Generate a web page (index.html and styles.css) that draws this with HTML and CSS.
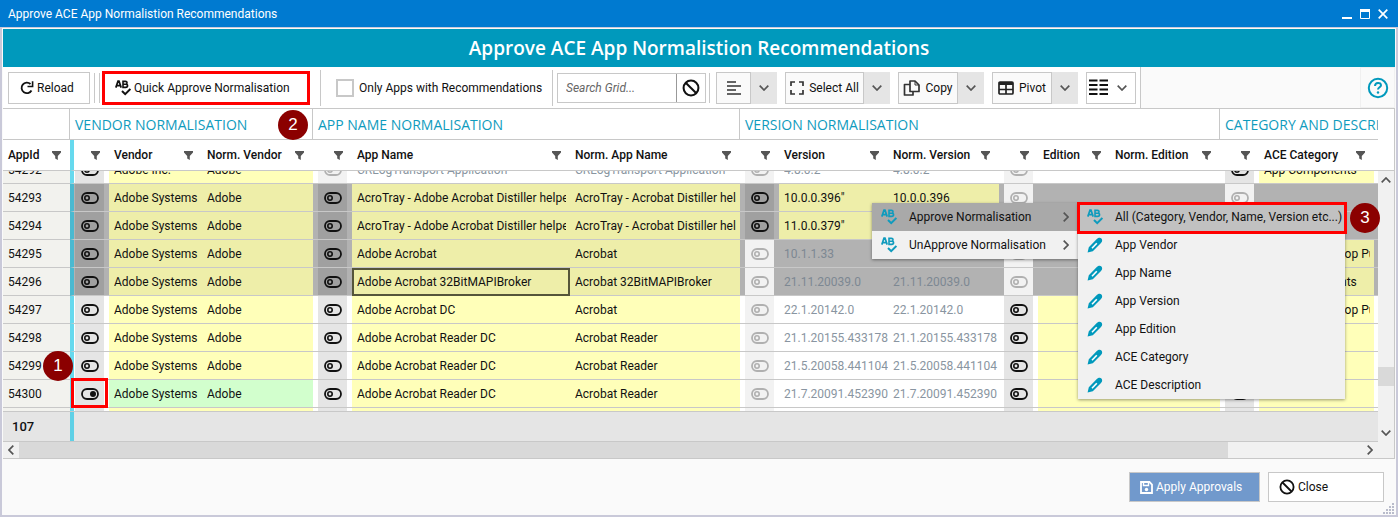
FILE: index.html
```html
<!DOCTYPE html>
<html lang="en">
<head>
  <meta charset="UTF-8">
  <title>Approve ACE App Normalistion Recommendations</title>
  <link rel="stylesheet" href="styles.css">
</head>
<body>
  <svg class="sprite">
    <symbol id="i-filter" viewBox="0 0 9 9"><path d="M0 0h9v1.5L5.8 5v4L3.2 7.5V5L0 1.5z" fill="#555"/></symbol>
    <symbol id="i-abc" viewBox="0 0 16 16">
      <path d="M.8 7.6 3 1.2h1L6.2 7.6M1.6 5.6h3.8" fill="none" stroke="currentColor" stroke-width="1.7"/>
      <path d="M8 1.4h2.4c2.2 0 2.2 2.8 0 2.8H8h2.7c2.5 0 2.5 3.2 0 3.2H8z" fill="none" stroke="currentColor" stroke-width="1.6"/>
      <path d="M7 11l3.2 3.2L15.4 9" fill="none" stroke="currentColor" stroke-width="2"/>
    </symbol>
    <symbol id="i-pen" viewBox="0 0 16 16">
      <path d="M.6 15.400l1.200-5.200L9.800 2c1.800-1.800 3.800-1.400 4.600-.6s1.400 2.800-.4 4.600L5.800 14.200z" fill="#0099bc"/>
      <path d="M5 11.200 9.800 6.300" stroke="#fff" stroke-width="1.600"/>
    </symbol>
    <symbol id="i-down" viewBox="0 0 10 6"><path d="M.7.7 5 5 9.3.7" fill="none" stroke="#555" stroke-width="1.7"/></symbol>
    <symbol id="i-right" viewBox="0 0 6 10"><path d="M.7.7 5 5 .7 9.3" fill="none" stroke="#555" stroke-width="1.7"/></symbol>
    <symbol id="i-ban" viewBox="0 0 16 16"><circle cx="8" cy="8" r="6.600" fill="none" stroke="#111" stroke-width="1.8"/><path d="M3.500 3.500l9 9" stroke="#111" stroke-width="1.8"/></symbol>
    <symbol id="i-off" viewBox="0 0 18 12"><rect x="1" y="1" width="16" height="10" rx="5" fill="none" stroke="currentColor" stroke-width="1.800"/><circle cx="6" cy="6" r="2.200" fill="none" stroke="currentColor" stroke-width="1.600"/></symbol>
    <symbol id="i-on" viewBox="0 0 18 12"><rect x="1" y="1" width="16" height="10" rx="5" fill="none" stroke="currentColor" stroke-width="1.800"/><circle cx="12" cy="6" r="3" fill="currentColor"/></symbol>
  </svg>

  <div class="window">
    <div class="titlebar">
      <span>Approve ACE App Normalistion Recommendations</span>
      <div class="window-btns">
        <button aria-label="Minimise"><svg width="10" height="10"><path d="M0 9h10" stroke="#fff" stroke-width="2"/></svg></button>
        <button aria-label="Maximise"><svg width="10" height="10"><path d="M.5 1v8.500h9V1" fill="none" stroke="#fff"/><path d="M0 1.500h10" stroke="#fff" stroke-width="3"/></svg></button>
        <button aria-label="Close window"><svg width="10" height="10"><path d="M.7.7l8.600 8.600M9.300.7.7 9.300" stroke="#fff" stroke-width="1.7"/></svg></button>
      </div>
    </div>

    <div class="content">
      <h1>Approve ACE App Normalistion Recommendations</h1>

      <div class="toolbar">
        <div class="tools">
          <button class="btn reload">
            <svg width="14" height="14" viewBox="0 0 14 14"><path d="M11.500 9.500A5.300 5.300 0 1 1 10.500 3" fill="none" stroke="#111" stroke-width="1.8"/><path d="M12.600.3v5.200H7.500" fill="none" stroke="#111" stroke-width="1.6"/></svg>
            Reload
          </button>
          <span class="sep"></span><span class="sep"></span>
          <button class="btn quick marked"><svg class="abc"><use href="#i-abc"/></svg> Quick Approve Normalisation</button>
          <span class="sep tall after-quick"></span>
          <label class="only"><input type="checkbox"> Only Apps with Recommendations</label>
          <span class="sep tall after-only"></span>
          <div class="search">
            <input type="text" placeholder="Search Grid..." aria-label="Search Grid">
            <button aria-label="Clear search"><svg width="18" height="18"><use href="#i-ban"/></svg></button>
          </div>
          <span class="sep after-search"></span>
          <div class="split">
            <button class="w-align" aria-label="Align"><svg width="14" height="14"><path d="M0 1h9M0 5h14M0 9h9M0 13h14" stroke="#333" stroke-width="1.5"/></svg></button>
            <button class="drop" aria-label="Align options"><svg width="10" height="6"><use href="#i-down"/></svg></button>
          </div>
          <div class="split">
            <button class="w-select"><svg width="14" height="14"><path d="M1 5V1h4M9 1h4v4M13 9v4H9M5 13H1V9" fill="none" stroke="#333" stroke-width="1.7"/></svg> Select All</button>
            <button class="drop" aria-label="Select options"><svg width="10" height="6"><use href="#i-down"/></svg></button>
          </div>
          <div class="split">
            <button class="w-copy"><svg width="17" height="16"><path d="M7 1h5l4 4v6.500H7z" fill="none" stroke="#333" stroke-width="1.7" stroke-linejoin="round"/><path d="M12 1v4h4" fill="none" stroke="#333"/><path d="M7 4.500H1.500V15H10v-3" fill="none" stroke="#333" stroke-width="1.7" stroke-linejoin="round"/></svg> Copy</button>
            <button class="drop" aria-label="Copy options"><svg width="10" height="6"><use href="#i-down"/></svg></button>
          </div>
          <div class="split">
            <button class="w-pivot"><svg width="16" height="14"><rect x="1" y="1" width="14" height="12" rx="1" fill="none" stroke="#222" stroke-width="1.7"/><path d="M1 2.500h14" stroke="#222" stroke-width="3"/><path d="M1 8.500h14M8 3v10" stroke="#222" stroke-width="1.7"/></svg> Pivot</button>
            <button class="drop" aria-label="Pivot options"><svg width="10" height="6"><use href="#i-down"/></svg></button>
          </div>
          <button class="btn columns" aria-label="Columns">
            <svg width="19" height="17"><path d="M0 1.500h8.500M10.500 1.500H19M0 6h8.500M10.500 6H19M0 10.500h8.500M10.500 10.500H19M0 15h8.500M10.500 15H19" stroke="#111" stroke-width="1.8"/></svg>
            <svg width="10" height="6"><use href="#i-down"/></svg>
          </button>
        </div>
        <button class="help" aria-label="Help">
          <svg width="22" height="22"><circle cx="11" cy="11" r="9.200" fill="none" stroke="#0099bc" stroke-width="2"/><path d="M8 9c0-4 6-4 6-.8 0 2.200-3 2-3 4.400" fill="none" stroke="#0099bc" stroke-width="2"/><circle cx="11" cy="15.500" r="1.200" fill="#0099bc"/></svg>
        </button>
      </div>

      <div class="grid">
        <div class="grid-main">
          <table class="head">
            <colgroup></colgroup>
            <thead>
              <tr class="groups">
                <th></th>
                <th colspan="3">VENDOR NORMALISATION</th>
                <th colspan="3">APP NAME NORMALISATION</th>
                <th colspan="6">VERSION NORMALISATION</th>
                <th colspan="3">CATEGORY AND DESCRIPTION</th>
              </tr>
              <tr class="cols" id="cols"></tr>
            </thead>
          </table>
          <div class="grid-body" id="gridBody">
            <table>
              <colgroup></colgroup>
              <tbody id="rows"></tbody>
            </table>
          </div>
          <div class="summary"><span class="count">107</span></div>
          <div class="hscroll">
            <svg class="arrow flip" width="6" height="10"><use href="#i-right"/></svg>
            <div class="track"><div class="thumb"></div></div>
            <svg class="arrow" width="6" height="10"><use href="#i-right"/></svg>
          </div>
        </div>
        <div class="grid-side">
          <div class="vscroll">
            <svg class="up" width="10" height="6"><use href="#i-down"/></svg>
            <div class="thumb"></div>
            <svg width="10" height="6"><use href="#i-down"/></svg>
          </div>
        </div>
      </div>

      <div class="footer">
        <button class="apply"><svg width="13" height="13"><path d="M1 1h8.500L12 3.500V12H1z" fill="none" stroke="#fff" stroke-width="1.8"/><path d="M3.500 1v3.500h5V1" fill="none" stroke="#fff" stroke-width="1.4"/><circle cx="6.500" cy="8.500" r="1.700" fill="#fff"/></svg> Apply Approvals</button>
        <button class="close"><svg width="16" height="16"><use href="#i-ban"/></svg> Close</button>
        <svg class="grip" width="11" height="11"><path d="M9 1h2M6 4h2M9 4h2M3 7h2M6 7h2M9 7h2M0 10h2M3 10h2M6 10h2M9 10h2" stroke="#b9bccb" stroke-width="2"/></svg>
      </div>
    </div>

    <div class="menu main-menu">
      <button class="active"><svg class="abc"><use href="#i-abc"/></svg>Approve Normalisation<svg class="more" width="6" height="10"><use href="#i-right"/></svg></button>
      <button><svg class="abc"><use href="#i-abc"/></svg>UnApprove Normalisation<svg class="more" width="6" height="10"><use href="#i-right"/></svg></button>
    </div>
    <div class="menu sub-menu">
      <button class="picked"><svg class="abc"><use href="#i-abc"/></svg>All (Category, Vendor, Name, Version etc...)</button>
      <button><svg class="abc"><use href="#i-pen"/></svg>App Vendor</button>
      <button><svg class="abc"><use href="#i-pen"/></svg>App Name</button>
      <button><svg class="abc"><use href="#i-pen"/></svg>App Version</button>
      <button><svg class="abc"><use href="#i-pen"/></svg>App Edition</button>
      <button><svg class="abc"><use href="#i-pen"/></svg>ACE Category</button>
      <button><svg class="abc"><use href="#i-pen"/></svg>ACE Description</button>
    </div>

    <div class="frame frame-row"></div>
    <div class="frame frame-all"></div>
    <div class="badge badge-1">1</div>
    <div class="badge badge-2">2</div>
    <div class="badge badge-3">3</div>
  </div>

  <script src="script.js"></script>
</body>
</html>
```
FILE: styles.css
```css
* {
  box-sizing: border-box;
}
body {
  margin: 0;
  font-family: Roboto, "Open Sans", sans-serif;
  font-size: 12px;
  color: #111;
}
button,
input {
  font: inherit;
  color: inherit;
  margin: 0;
}
button {
  display: flex;
  align-items: center;
  padding: 0;
  border: none;
  background: none;
  white-space: nowrap;
}
svg {
  flex: none;
}
.sprite {
  display: none;
}
.abc {
  width: 16px;
  height: 16px;
}
.window {
  position: relative;
  display: flex;
  flex-direction: column;
  height: 100vh;
  min-height: 400px;
  overflow: hidden;
  background: #c9c9d9;
}

/* title bar */
.titlebar {
  display: flex;
  justify-content: space-between;
  align-items: center;
  height: 27px;
  padding: 0 10px 0 8px;
  background: #007ad0;
  color: #fff;
}
.window-btns {
  display: flex;
  gap: 8px;
}
.content {
  flex: 1;
  min-height: 0;
  display: flex;
  flex-direction: column;
  margin: 1px 2px 2px;
  padding: 1px 1px 0;
  background: #fafafa;
}
h1 {
  margin: 0;
  background: #0099bc;
  color: #fff;
  font-family: "Open Sans", sans-serif;
  font-size: 19px;
  font-weight: 600;
  line-height: 38px;
  text-align: center;
}

/* toolbar */
.toolbar {
  display: flex;
  justify-content: space-between;
  height: 41px;
}
.tools {
  display: flex;
  align-items: center;
  padding: 0 4px 0 5px;
  background: #fff;
  border-right: 1px solid #c8c8c8;
}
.btn {
  height: 32px;
  border: 1px solid #c8c8c8;
  background: #fff;
}
.reload {
  width: 82px;
  padding-left: 11px;
  gap: 3px;
}
.sep {
  width: 1px;
  height: 30px;
  margin-left: 4px;
  background: #c8c8c8;
}
.sep.tall {
  height: 36px;
}
.quick {
  width: 208px;
  height: 34px;
  margin-left: 2px;
  padding-left: 10px;
  gap: 3px;
}
.marked {
  border: 3px solid #f00;
}
.sep.after-quick {
  margin: 0 15px 0 10px;
}
.only {
  display: flex;
  align-items: center;
  gap: 5px;
  width: 216px;
  white-space: nowrap;
}
.only input {
  appearance: none;
  width: 18px;
  height: 18px;
  border: 2px solid #c8c8c8;
  background: #fff;
}
.sep.after-only {
  margin: 0 4px 0 0;
}
.search {
  display: flex;
  width: 149px;
  height: 30px;
  border: 1px solid #c8c8c8;
}
.search input {
  width: 119px;
  padding: 0 8px;
  border: none;
  border-right: 1px solid #999;
  outline: none;
}
.search input::placeholder {
  color: #666;
  font-style: italic;
}
.search button {
  flex: 1;
  justify-content: center;
}
.sep.after-search {
  margin: 0 6px 0 3px;
}
.split {
  display: flex;
  height: 32px;
  margin-right: 8px;
}
.split button {
  justify-content: center;
  gap: 5px;
  border: 1px solid #c8c8c8;
  background: #fafafa;
}
.split .drop {
  width: 26px;
  border: none;
  background: #e5e5e5;
}
.split .w-align {
  width: 35px;
}
.split .w-select {
  width: 79px;
}
.split .w-copy,
.split .w-pivot {
  width: 60px;
}
.columns {
  width: 50px;
  justify-content: space-between;
  padding: 0 8px 0 2px;
}
.help {
  width: 35px;
  justify-content: center;
  border: 1px solid #f0f0f0;
}

/* grid */
.grid {
  flex: 1;
  min-height: 0;
  display: flex;
  border: solid #c8c8c8;
  border-width: 1px 1px 1px 0;
  background: #fff;
}
.grid-main {
  flex: 1;
  min-width: 0;
  display: flex;
  flex-direction: column;
}
table {
  width: 100%;
  table-layout: fixed;
  border-collapse: separate;
  border-spacing: 0;
}
th,
td {
  padding: 0;
  overflow: hidden;
  white-space: nowrap;
  text-align: left;
}
.groups th {
  height: 31px;
  padding-left: 5px;
  border-bottom: 1px solid #c8c8c8;
  border-right: 1px solid #c8c8c8;
  color: #0f9bbd;
  font-family: "Open Sans", sans-serif;
  font-size: 14px;
  font-weight: 500;
}
.groups th:last-child {
  border-right: none;
}
.cols th {
  height: 31px;
  border-bottom: 1px solid #c8c8c8;
  font-weight: 500;
}
.cols div {
  display: flex;
  align-items: center;
  justify-content: space-between;
  padding: 0 9px 0 5px;
}
.cols svg {
  width: 9px;
  height: 9px;
}
.split-col {
  border-left: 4px solid #66d9ee;
}
.grid-body {
  flex: 1;
  min-height: 0;
  overflow: hidden;
}
td {
  height: 28px;
  border-bottom: 1px solid #c8c8c8;
}
td .text {
  display: block;
  margin: 0 4px 0 5px;
  overflow: hidden;
}
td.id {
  background: #f2f2ee;
}
td.muted {
  color: #8995a1;
}
td.muted .text {
  margin-right: 0;
}
td.rec {
  background: #ffffb9;
}
td.done {
  background: #d2ffcd;
}
td.toggle {
  color: #111;
}
.switch {
  display: flex;
  width: 29px;
  height: 27px;
  margin-left: 5px;
  justify-content: center;
  background: #e5e5e5;
}
.split-col .switch {
  margin-left: 1px;
}
.switch svg {
  width: 18px;
  height: 12px;
}
.switch.off {
  background: #f2f2f2;
  color: #b0b0b0;
}
.selected td {
  background: #b2b2b2;
}
.selected td.muted {
  color: #7d8892;
}
.selected td.id {
  background: #f2f2ee;
}
.selected td.rec {
  background: #eeeea9;
}
.selected .split-col {
  border-left-color: #4ab9d0;
}
.selected .switch {
  background: #a0a0a0;
}
.selected .switch.off {
  background: #f2f2f2;
}
td.focus {
  outline: 2px solid #55553a;
  outline-offset: -2px;
}
.summary {
  display: flex;
  height: 31px;
  border-top: 1px solid #c8c8c8;
  border-bottom: 1px solid #c8c8c8;
  background: #e5e5e5;
  font-size: 13px;
  font-weight: 500;
  line-height: 30px;
}
.count {
  width: 71px;
  padding-left: 9px;
  border-right: 4px solid #5fd0e6;
}
.hscroll {
  display: flex;
  align-items: center;
  height: 16px;
  background: #f1f1f1;
}
.arrow {
  margin: 0 5px;
}
.flip {
  transform: scaleX(-1);
}
.track {
  flex: 1;
  height: 16px;
}
.track .thumb {
  width: 90%;
  height: 16px;
  background: #d9d9d9;
}
.grid-side {
  width: 16px;
  padding-top: 61px;
}
.vscroll {
  display: flex;
  flex-direction: column;
  align-items: center;
  height: 100%;
  padding: 6px 0 22px;
  border-top: 1px solid #c8c8c8;
  background: #f1f1f1;
}
.up {
  transform: scaleY(-1);
}
.vscroll .thumb {
  width: 16px;
  height: 19px;
  margin: auto 0 44px;
  background: #d9d9d9;
}

/* footer */
.footer {
  position: relative;
  display: flex;
  justify-content: flex-end;
  gap: 8px;
  height: 56px;
  padding: 13px 11px 0;
}
.footer button {
  height: 30px;
  gap: 3px;
  padding-left: 10px;
  border: 1px solid #c8c8c8;
}
.footer .apply {
  width: 131px;
  background: #7199cc;
  color: #fff;
}
.footer .close {
  width: 116px;
  background: #fff;
}
.grip {
  position: absolute;
  right: 1px;
  bottom: 1px;
}

/* context menus */
.menu {
  position: absolute;
  top: 203px;
  background: #f1f1f1;
  box-shadow: 0 1px 3px rgba(0, 0, 0, 0.4);
}
.menu button {
  width: 100%;
  height: 28px;
  padding: 0 9px;
  gap: 12px;
}
.menu .abc {
  color: #0f9bbd;
}
.menu .active {
  background: #a9a9a9;
}
.menu .picked {
  background: #c1c1c1;
}
.more {
  margin-left: auto;
}
.main-menu {
  left: 872px;
  width: 206px;
}
.sub-menu {
  left: 1078px;
  width: 267px;
}

/* numbered call-outs */
.frame {
  position: absolute;
  border: 3px solid #f00;
}
.frame-row {
  left: 71px;
  top: 378px;
  width: 37px;
  height: 30px;
}
.frame-all {
  left: 1077px;
  top: 202px;
  width: 270px;
  height: 32px;
}
.badge {
  position: absolute;
  width: 30px;
  height: 30px;
  border-radius: 50%;
  background: #8b0000;
  color: #fff;
  font-family: "Liberation Sans", Arial, sans-serif;
  font-size: 17px;
  line-height: 30px;
  text-align: center;
}
.badge-1 {
  left: 43px;
  top: 351px;
}
.badge-2 {
  left: 278px;
  top: 110px;
}
.badge-3 {
  left: 1350px;
  top: 203px;
}
```
FILE: script.js
```js
const columns = [
  { title: "AppId", width: 67 },
  { title: "", width: 39, toggle: true },
  { title: "Vendor", width: 93 },
  { title: "Norm. Vendor", width: 111 },
  { title: "", width: 39, toggle: true },
  { title: "App Name", width: 218 },
  { title: "Norm. App Name", width: 170 },
  { title: "", width: 39, toggle: true },
  { title: "Version", width: 109 },
  { title: "Norm. Version", width: 111 },
  { title: "", width: 39, toggle: true },
  { title: "Edition", width: 72 },
  { title: "Norm. Edition", width: 110 },
  { title: "", width: 39, toggle: true },
  { title: "ACE Category" },
  { title: null, width: 4 }
];

// state of each group: "rec" = recommended, "done" = approved, "" = nothing to approve
const data = [
  { id: 54292, vendor: ["rec", "Adobe Inc.", "Adobe"], name: ["", "CRLogTransport Application", "CRLogTransport Application"], version: ["", "4.8.0.2", "4.8.0.2"], edition: "", category: ["rec", "App Components"] },
  { id: 54293, selected: true, vendor: ["rec", "Adobe Systems", "Adobe"], name: ["rec", "AcroTray - Adobe Acrobat Distiller helper", "AcroTray - Acrobat Distiller helper"], version: ["rec", "10.0.0.396\"", "10.0.0.396"], edition: "", category: ["", ""] },
  { id: 54294, selected: true, vendor: ["rec", "Adobe Systems", "Adobe"], name: ["rec", "AcroTray - Adobe Acrobat Distiller helper", "AcroTray - Acrobat Distiller helper"], version: ["rec", "11.0.0.379\"", "11.0.0.379"], edition: "", category: ["", ""] },
  { id: 54295, selected: true, vendor: ["rec", "Adobe Systems", "Adobe"], name: ["rec", "Adobe Acrobat", "Acrobat"], version: ["", "10.1.1.33", "10.1.1.33"], edition: "", category: ["rec", "Graphics Desktop Publishing"] },
  { id: 54296, selected: true, focus: true, vendor: ["rec", "Adobe Systems", "Adobe"], name: ["rec", "Adobe Acrobat 32BitMAPIBroker", "Acrobat 32BitMAPIBroker"], version: ["", "21.11.20039.0", "21.11.20039.0"], edition: "", category: ["rec", "App Components"] },
  { id: 54297, vendor: ["rec", "Adobe Systems", "Adobe"], name: ["rec", "Adobe Acrobat DC", "Acrobat"], version: ["", "22.1.20142.0", "22.1.20142.0"], edition: "rec", category: ["rec", "Graphics Desktop Publishing"] },
  { id: 54298, vendor: ["rec", "Adobe Systems", "Adobe"], name: ["rec", "Adobe Acrobat Reader DC", "Acrobat Reader"], version: ["", "21.1.20155.433178", "21.1.20155.433178"], edition: "rec", category: ["rec", ""] },
  { id: 54299, vendor: ["rec", "Adobe Systems", "Adobe"], name: ["rec", "Adobe Acrobat Reader DC", "Acrobat Reader"], version: ["", "21.5.20058.441104", "21.5.20058.441104"], edition: "rec", category: ["rec", ""] },
  { id: 54300, vendor: ["done", "Adobe Systems", "Adobe"], name: ["rec", "Adobe Acrobat Reader DC", "Acrobat Reader"], version: ["", "21.7.20091.452390", "21.7.20091.452390"], edition: "rec", category: ["rec", ""] },
  { id: "", vendor: ["rec", "", ""], name: ["rec", "", ""], version: ["", "", ""], edition: "rec", category: ["rec", ""] }
];

document.querySelectorAll("colgroup").forEach(group => {
  group.innerHTML = columns.map(c => c.width ? `<col style="width:${c.width}px">` : "<col>").join("");
});

document.getElementById("cols").innerHTML = columns.map((c, i) => {
  if (c.title === null) return "<th></th>";
  return `<th class="${i === 1 ? "split-col" : ""}"><div><span>${c.title}</span><svg><use href="#i-filter"/></svg></div></th>`;
}).join("");

function toggleCell(state, first) {
  const icon = state === "done" ? "i-on" : "i-off";
  return `<td class="toggle ${first ? "split-col" : ""}"><button class="switch ${state ? "" : "off"}" aria-label="Approve"><svg><use href="#${icon}"/></svg></button></td>`;
}

function textCell(state, text, focus) {
  return `<td class="${state || "muted"} ${focus ? "focus" : ""}"><span class="text">${text}</span></td>`;
}

document.getElementById("rows").innerHTML = data.map(r => `
  <tr class="${r.selected ? "selected" : ""}">
    <td class="id"><span class="text">${r.id}</span></td>
    ${toggleCell(r.vendor[0], true)}${textCell(r.vendor[0], r.vendor[1])}${textCell(r.vendor[0], r.vendor[2])}
    ${toggleCell(r.name[0])}${textCell(r.name[0], r.name[1], r.focus)}${textCell(r.name[0], r.name[2])}
    ${toggleCell(r.version[0])}${textCell(r.version[0], r.version[1])}${textCell(r.version[0], r.version[2])}
    ${toggleCell(r.edition)}${textCell(r.edition, "")}${textCell(r.edition, "")}
    ${toggleCell(r.category[0])}${textCell(...r.category)}
    <td></td>
  </tr>`).join("");

// the list opens scrolled part way down its first row
document.getElementById("gridBody").scrollTop = 15;
```
